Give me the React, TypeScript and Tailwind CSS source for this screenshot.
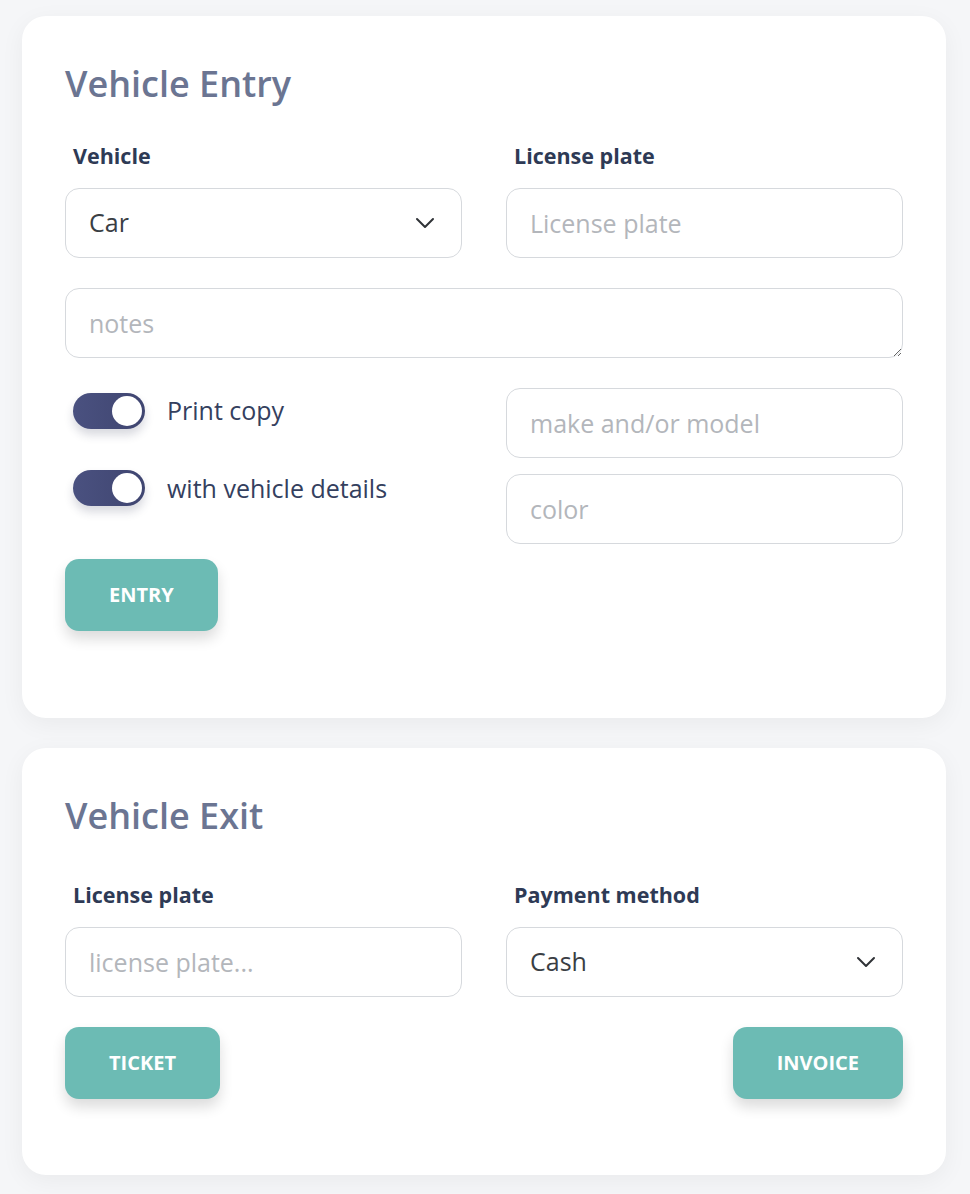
import { useState } from "react";

const font = { fontFamily: '"Open Sans", "Noto Sans", sans-serif' };

function Chevron() {
  return (
    <svg width="20" height="12" viewBox="0 0 20 12" fill="none" className="shrink-0">
      <path d="M2 2 L10 10 L18 2" stroke="#2f3236" strokeWidth="2" strokeLinecap="round" strokeLinejoin="round" />
    </svg>
  );
}

function Select({ value }: { value: string }) {
  return (
    <div className="h-[70px] w-full rounded-[14px] border border-[#d6d9dd] bg-white flex items-center justify-between pl-[23px] pr-[26px]">
      <span className="text-[25px] text-[#3a3e44]">{value}</span>
      <Chevron />
    </div>
  );
}

function TextInput({ placeholder }: { placeholder: string }) {
  return (
    <input
      placeholder={placeholder}
      className="h-[70px] w-full rounded-[14px] border border-[#d6d9dd] bg-white px-[23px] text-[25px] text-[#3a3e44] placeholder:text-[#b3b6bb] outline-none"
    />
  );
}

function Label({ children }: { children: React.ReactNode }) {
  return <div className="pl-2 text-[21.5px] leading-[28px] font-bold text-[#2e3a55]">{children}</div>;
}

function Toggle({ label }: { label: string }) {
  const [on, setOn] = useState(true);
  return (
    <div className="flex items-center gap-[22px] pl-2">
      <button
        onClick={() => setOn(!on)}
        className={`h-[36px] w-[72px] rounded-full flex items-center px-[3px] shadow-[0_6px_10px_rgba(40,45,80,0.18)] ${
          on ? "bg-gradient-to-r from-[#4a5180] to-[#3f4570] justify-end" : "bg-gray-300 justify-start"
        }`}
      >
        <span className="h-[30px] w-[30px] rounded-full bg-white" />
      </button>
      <span className="text-[25px] text-[#34405e]">{label}</span>
    </div>
  );
}

function ActionButton({ children }: { children: React.ReactNode }) {
  return (
    <button className="h-[72px] px-[44px] rounded-[14px] bg-[#6cbbb4] text-white text-[20px] font-bold uppercase shadow-[0_8px_14px_rgba(0,0,0,0.14)]">
      {children}
    </button>
  );
}

function Card({ children, className = "" }: { children: React.ReactNode; className?: string }) {
  return (
    <div className={`w-[924px] ml-[22px] rounded-[24px] bg-white px-[43px] pt-[46px] shadow-[0_6px_24px_rgba(0,0,0,0.05)] ${className}`}>
      {children}
    </div>
  );
}

export default function App() {
  return (
    <div className="min-h-[1194px] bg-[#f5f6f8] pt-[16px] pb-[20px]" style={font}>
      <Card className="h-[702px]">
        <h1 className="text-[36px] leading-[44px] font-semibold text-[#6b7592]">Vehicle Entry</h1>

        <div className="grid grid-cols-2 gap-x-[44px] mt-[36px]">
          <div>
            <Label>Vehicle</Label>
            <div className="mt-[18px]">
              <Select value="Car" />
            </div>
          </div>
          <div>
            <Label>License plate</Label>
            <div className="mt-[18px]">
              <TextInput placeholder="License plate" />
            </div>
          </div>
        </div>

        <textarea
          placeholder="notes"
          className="mt-[30px] block h-[70px] w-full rounded-[14px] border border-[#d6d9dd] px-[23px] py-[17px] text-[25px] leading-[34px] placeholder:text-[#b3b6bb] outline-none"
        />

        <div className="grid grid-cols-2 gap-x-[44px] mt-[30px]">
          <div className="flex flex-col gap-[40px] pt-[4px]">
            <Toggle label="Print copy" />
            <Toggle label="with vehicle details" />
          </div>
          <div className="flex flex-col gap-[16px]">
            <TextInput placeholder="make and/or model" />
            <TextInput placeholder="color" />
          </div>
        </div>

        <div className="mt-[15px]">
          <ActionButton>Entry</ActionButton>
        </div>
      </Card>

      <Card className="h-[427px] mt-[30px]">
        <h1 className="text-[36px] leading-[44px] font-semibold text-[#6b7592]">Vehicle Exit</h1>

        <div className="grid grid-cols-2 gap-x-[44px] mt-[43px]">
          <div>
            <Label>License plate</Label>
            <div className="mt-[18px]">
              <TextInput placeholder="license plate..." />
            </div>
          </div>
          <div>
            <Label>Payment method</Label>
            <div className="mt-[18px]">
              <Select value="Cash" />
            </div>
          </div>
        </div>

        <div className="mt-[30px] flex justify-between">
          <ActionButton>Ticket</ActionButton>
          <ActionButton>Invoice</ActionButton>
        </div>
      </Card>
    </div>
  );
}
